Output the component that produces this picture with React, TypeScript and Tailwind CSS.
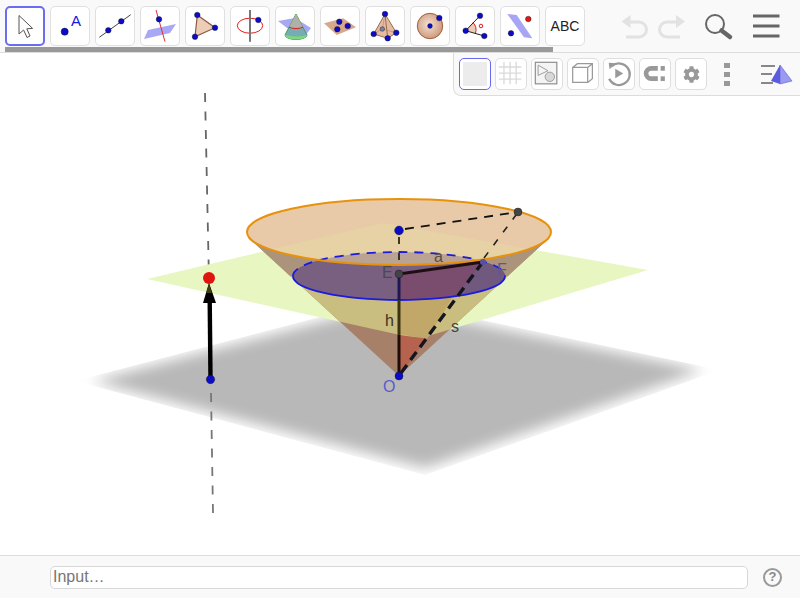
import type { ReactNode } from "react";
import { FaCog } from "react-icons/fa";

const Dot = ({ x, y, r = 2.8, fill = "#0c0cc8" }: { x: number; y: number; r?: number; fill?: string }) => (
  <circle cx={x} cy={y} r={r} fill={fill} stroke="#111" strokeWidth={0.4} />
);

const tools: ReactNode[] = [
  <path key="move" d="M14 9.5 L14 28 L18.6 24 L22 31.5 L25 30 L21.8 22.8 L27.6 22.4 Z" fill="#fff" stroke="#555" strokeWidth={1} strokeLinejoin="round" />,
  <g key="point">
    <Dot x={14.7} y={25.7} r={3.6} />
    <text x={26} y={20} textAnchor="middle" fontSize={15} fill="#1616e0">A</text>
  </g>,
  <g key="line">
    <line x1={4.3} y1={31.3} x2={35.7} y2={8.7} stroke="#444" strokeWidth={1} />
    <Dot x={13.3} y={24.3} />
    <Dot x={26.3} y={15.3} />
  </g>,
  <g key="perp">
    <polygon points="8,24 36,18 30,27 4,33" fill="#a8a8f6" />
    <line x1={16} y1={4} x2={25} y2={35.7} stroke="#e03030" strokeWidth={1} />
    <Dot x={19} y={13.3} />
  </g>,
  <g key="polygon">
    <polygon points="12.3,9 30,21.7 10,30.7" fill="#eccdb8" stroke="#8a5a40" strokeWidth={1.2} />
    <Dot x={12.3} y={9} />
    <Dot x={30} y={21.7} />
    <Dot x={10} y={30.7} />
  </g>,
  <g key="circle">
    <ellipse cx={20} cy={19.7} rx={12.7} ry={7.5} fill="none" stroke="#e02020" strokeWidth={1} />
    <line x1={20} y1={4} x2={20} y2={35.7} stroke="#777" strokeWidth={2} />
    <Dot x={28.3} y={14} />
  </g>,
  <g key="cone">
    <polygon points="3,15 20,12 36,22 30,30 12,22" fill="#a8a8f2" />
    <path d="M21 8 L10 29 A11 4.5 0 0 0 32 29 Z" fill="#8fd08f" stroke="#3aa03a" strokeWidth={1} />
    <path d="M21 8 L14 21 A8 3 0 0 0 28 21 Z" fill="#b0b0a8" />
    <path d="M14 21 L10 29 A11 4.5 0 0 0 32 29 L28 21 A8 3 0 0 1 14 21 Z" fill="#5f8fd0" opacity={0.55} />
    <path d="M14 21 A8 3 0 0 0 28 21" fill="none" stroke="#e02020" strokeWidth={1} />
    <path d="M13.5 29.5 A11 3 0 0 0 30 29.5 L32 29 A11 4.5 0 0 1 10 29 Z" fill="#7ed67e" />
  </g>,
  <g key="plane">
    <polygon points="4,17.3 23.3,12.3 36,21.3 16.7,29" fill="#d8a88c" />
    <Dot x={19.3} y={15.7} />
    <Dot x={27.7} y={20} />
    <Dot x={17.3} y={23.3} />
  </g>,
  <g key="pyramid">
    <polygon points="20,8 8.7,28 22.7,32.3 31.3,26.7" fill="#e4bca2" stroke="#9a6a4c" strokeWidth={1} />
    <line x1={20} y1={8} x2={22.7} y2={32.3} stroke="#9a6a4c" strokeWidth={1} />
    <path d="M8.7 28 L17.3 23 L31.3 26.7 M20 8 L17.3 23" fill="none" stroke="#b88a70" strokeWidth={0.7} />
    <Dot x={17.3} y={23} r={2.3} fill="#7b80a8" />
    <Dot x={20} y={8} />
    <Dot x={8.7} y={28} />
    <Dot x={22.7} y={32.3} />
    <Dot x={31.3} y={26.7} />
  </g>,
  <g key="sphere">
    <defs>
      <radialGradient id="sphereFill" cx="0.45" cy="0.45" r="0.6">
        <stop offset="0" stopColor="#f4e2d6" />
        <stop offset="1" stopColor="#cc9474" />
      </radialGradient>
    </defs>
    <circle cx={20} cy={20} r={12.7} fill="url(#sphereFill)" stroke="#a0603f" strokeWidth={1} />
    <Dot x={20} y={20} r={2.4} />
    <Dot x={29.3} y={12} />
  </g>,
  <g key="angle">
    <path d="M10.7 24.7 L18 16.5 A11 11 0 0 1 20.5 27.3 Z" fill="#eccdb8" />
    <path d="M18 16.5 A11 11 0 0 1 20.5 27.3" fill="none" stroke="#e02020" strokeWidth={1} />
    <line x1={10.7} y1={24.7} x2={25} y2={9.7} stroke="#222" strokeWidth={1} />
    <line x1={10.7} y1={24.7} x2={29.3} y2={30} stroke="#222" strokeWidth={1} />
    <circle cx={26} cy={20} r={1.8} fill="none" stroke="#e02020" strokeWidth={1} />
    <Dot x={10.7} y={24.7} />
    <Dot x={25} y={9.7} />
    <Dot x={29.3} y={30} />
  </g>,
  <g key="parallel">
    <polygon points="7.3,8 16.7,9 32.3,32.3 24,31.3" fill="#a6a6f4" />
    <Dot x={11} y={27.3} />
    <Dot x={28.3} y={13} fill="#e01818" />
  </g>,
  <text key="abc" x={20} y={25} textAnchor="middle" fontSize={14} fill="#222">ABC</text>,
];

const StyleBtn = ({ children, active }: { children: ReactNode; active?: boolean }) => (
  <div
    className={
      active
        ? "w-8 h-8 rounded-[5px] border border-[#6868f0] bg-white"
        : "w-8 h-8 rounded-[5px] border border-[#dedede] bg-white"
    }
  >
    {children}
  </div>
);

const Icon32 = ({ children }: { children: ReactNode }) => (
  <svg viewBox="0 0 32 32" className="w-[30px] h-[30px]">
    {children}
  </svg>
);

const Scene = () => (
  <svg viewBox="0 53 800 502" className="w-[800px] h-[502px] block">
    <defs>
      <clipPath id="grayClip">
        <polygon points="75,381 425,475 720,370 385,300" />
      </clipPath>
      <filter id="soft" x="-10%" y="-10%" width="120%" height="120%">
        <feGaussianBlur stdDeviation="7" />
      </filter>
      <clipPath id="coneClip">
        <path d="M399 376 L251 240 A152 33 0 0 1 547 240 Z" />
      </clipPath>
      <clipPath id="rimClip">
        <ellipse cx={399} cy={232} rx={152} ry={33} />
      </clipPath>
      <clipPath id="midClip">
        <ellipse cx={399} cy={276} rx={106} ry={24} />
      </clipPath>
    </defs>

    {/* floor */}
    <g clipPath="url(#grayClip)">
      <polygon points="92,381 425,468 703,370 385,305" fill="#b8b8b8" filter="url(#soft)" />
    </g>

    {/* axis */}
    <line x1={205} y1={93} x2={208.8} y2={272} stroke="#666" strokeWidth={1.8} strokeDasharray="9 9.5" />
    <line x1={211} y1={393} x2={213} y2={513} stroke="#777" strokeWidth={1.8} strokeDasharray="9 9.5" />

    {/* plane */}
    <polygon points="147,279 383,223 648,270 418,339" fill="#e8f7c2" />

    {/* cone body */}
    <path d="M399 376 L251 240 A152 33 0 0 1 547 240 Z" fill="#a78069" />
    <g clipPath="url(#coneClip)">
      <polygon points="147,279 383,223 648,270 418,339" fill="#cabd80" />
      <polygon points="240,190 560,190 560,276 240,276" fill="#ac937c" />
      <polygon points="399,298 452,298 427,339 399,334" fill="#c2a868" />
      <polygon points="398,335 427,338.5 400,375" fill="#b5634f" />
    </g>

    {/* cut circle */}
    <ellipse cx={399} cy={276} rx={106} ry={24} fill="#7a6080" />
    <g clipPath="url(#midClip)">
      <polygon points="399,274 483,262 450,304 399,304" fill="#7a4c6e" />
      <polygon points="483,262 520,262 520,304 450,304" fill="#70587e" />
    </g>

    {/* top disc */}
    <ellipse cx={399} cy={232} rx={152} ry={33} fill="#e9caa8" />
    <g clipPath="url(#rimClip)">
      <polygon points="147,279 383,223 648,270 418,339" fill="#e6d2a4" />
      <ellipse cx={399} cy={276} rx={106} ry={24} fill="#baa392" />
    </g>
    <path d="M293 276 A106 24 0 0 1 505 276" fill="none" stroke="#1a1ae0" strokeWidth={1.8} strokeDasharray="9 7" />
    <path d="M293 276 A106 24 0 0 0 505 276" fill="none" stroke="#1a1ae0" strokeWidth={1.8} />
    <ellipse cx={399} cy={232} rx={152} ry={33} fill="none" stroke="#e8920c" strokeWidth={2} />

    {/* segments */}
    <line x1={399} y1={237} x2={399} y2={268} stroke="#2a2a10" strokeWidth={1.8} strokeDasharray="7 9" />
    <line x1={399} y1={274} x2={399} y2={300} stroke="#1c1854" strokeWidth={3} />
    <line x1={399} y1={300} x2={399} y2={335} stroke="#3a3510" strokeWidth={3} />
    <line x1={399} y1={335} x2={399} y2={376} stroke="#1d0d08" strokeWidth={3} />
    <line x1={399} y1={274} x2={483} y2={262} stroke="#1f0f14" strokeWidth={3} />
    <line x1={401} y1={373} x2={482} y2={263} stroke="#151520" strokeWidth={3.4} strokeDasharray="10 6" />
    <line x1={484} y1={258} x2={516} y2={215} stroke="#222" strokeWidth={1.6} strokeDasharray="7 9" />
    <line x1={405} y1={229} x2={518} y2={212} stroke="#111" strokeWidth={1.8} strokeDasharray="9 7" />

    {/* points */}
    <Dot x={399} y={230.5} r={4.4} />
    <Dot x={518} y={212} r={4} fill="#444" />
    <Dot x={399} y={274} r={4} fill="#444" />
    <circle cx={483} cy={262} r={3} fill="#5a50a0" />
    <Dot x={399} y={376} r={4} />

    {/* vector */}
    <line x1={210.5} y1={379} x2={209.7} y2={300} stroke="#000" strokeWidth={4.4} />
    <polygon points="209,283 203,303 216,303" fill="#000" />
    <polygon points="209,283 206.2,293 211.8,293" fill="#3f3f10" />
    <circle cx={209} cy={278} r={6} fill="#e0140f" />
    <Dot x={210.5} y={379.5} r={4.2} />

    {/* labels */}
    <g fontSize={16}>
      <text x={382} y={278} fill="#4a4a4a">E</text>
      <text x={434} y={262} fill="#5c4e40">a</text>
      <text x={497} y={275} fill="#5a5a8e">F</text>
      <text x={385} y={326} fill="#3a3320">h</text>
      <text x={451} y={332} fill="#444">s</text>
      <text x={383} y={392} fill="#5a5acc">O</text>
    </g>
  </svg>
);

export default function App() {
  return (
    <div className="relative w-[800px] h-[600px] flex flex-col bg-white overflow-hidden font-['Liberation_Sans',sans-serif]">
      {/* top toolbar */}
      <div className="h-[53px] shrink-0 bg-[#f9f9f9] border-b border-[#dcdcdc]">
        <div className="flex h-[47px] pt-[6px] pl-[5px] gap-[5px]">
          {tools.map((icon, i) => (
            <div
              key={i}
              className={
                i === 0
                  ? "w-10 h-10 rounded-[5px] border-2 border-[#6a6cf2] bg-white"
                  : "w-10 h-10 rounded-[5px] border border-[#e0e0e0] bg-white"
              }
            >
              <svg viewBox="0 0 40 40" className={i === 0 ? "w-10 h-10 -m-[2px]" : "w-10 h-10 -m-px"}>
                {icon}
              </svg>
            </div>
          ))}
          {/* undo, redo, search, menu */}
          <svg viewBox="0 0 180 46" className="ml-auto w-[180px] h-[46px] -mt-[6px]">
            <g fill="none" stroke="#e2e2e2" strokeWidth={3}>
              <path d="M9 22 H19 A7.5 7.5 0 0 1 19 37 H6" />
              <path d="M57 22 H47 A7.5 7.5 0 0 0 47 37 H60" />
            </g>
            <polygon points="1.5,21.5 10.5,15 10.5,28" fill="#e2e2e2" />
            <polygon points="65,21.5 56,15 56,28" fill="#e2e2e2" />
            <circle cx={95} cy={24} r={9} fill="none" stroke="#666" strokeWidth={2} />
            <line x1={101.5} y1={30.5} x2={110} y2={37} stroke="#666" strokeWidth={4.5} strokeLinecap="round" />
            <path d="M133 16 H159.5 M133 26 H159.5 M133 36 H159.5" stroke="#666" strokeWidth={3} />
          </svg>
        </div>
        <div className="ml-[5px] w-[548px] h-[5px] bg-[#999]" />
      </div>

      {/* graphics view */}
      <div className="flex-1">
        <Scene />
      </div>

      {/* input bar */}
      <div className="h-[43px] shrink-0 mb-[2px] bg-[#f9f9f9] border-t border-[#dcdcdc] flex items-center pl-[50px] pr-[17px]">
        <div className="w-[698px] h-[23px] rounded-[5px] border border-[#d8d8d8] bg-white flex items-center pl-[2px] text-[16px] text-[#757575]">
          Input…
        </div>
        <div className="ml-[15px] w-[19px] h-[19px] rounded-full border-2 border-[#999] flex items-center justify-center text-[13px] font-bold text-[#888]">
          ?
        </div>
      </div>

      {/* style bar */}
      <div className="absolute left-[453px] top-[53px] w-[347px] h-[43px] bg-[#f9f9f9] border-l border-b border-[#dcdcdc] rounded-bl-[8px] flex items-start pl-[5px] pt-[5px] gap-1">
        <StyleBtn active>
          <div className="w-[24px] h-[24px] m-[3px] bg-[#ececec]" />
        </StyleBtn>
        <StyleBtn>
          <Icon32>
            <path d="M8.5 3 V27 M15 3 V27 M21.5 3 V27 M3 8.5 H27 M3 15 H27 M3 21.5 H27" stroke="#dadada" strokeWidth={1.4} fill="none" />
          </Icon32>
        </StyleBtn>
        <StyleBtn>
          <Icon32>
            <rect x={3.5} y={3.5} width={23} height={23} fill="#f4f4f4" stroke="#888" strokeWidth={1.2} />
            <polygon points="6.5,6.5 17,12.5 6.5,17.5" fill="#f4f4f4" stroke="#999" strokeWidth={1} />
            <circle cx={19} cy={19} r={5} fill="#d8d8d8" stroke="#999" strokeWidth={1} />
          </Icon32>
        </StyleBtn>
        <StyleBtn>
          <Icon32>
            <path d="M5 9 H21 V25 H5 Z M5 9 L10 5 H26 V21 L21 25 M21 9 L26 5" fill="none" stroke="#999" strokeWidth={1.3} />
          </Icon32>
        </StyleBtn>
        <StyleBtn>
          <Icon32>
            <path d="M8.5 7.5 A11.5 11.5 0 1 1 5.5 21" fill="none" stroke="#999" strokeWidth={2.4} />
            <polygon points="5,4 12.5,4.5 6,11" fill="#999" />
            <polygon points="12,10.5 20.5,15.5 12,20.5" fill="#999" />
          </Icon32>
        </StyleBtn>
        <StyleBtn>
          <Icon32>
            <path d="M19 10 H12 A5.5 5.5 0 0 0 12 21 H19" fill="none" stroke="#999" strokeWidth={5} />
            <rect x={22} y={7.5} width={4.5} height={5} fill="#999" />
            <rect x={22} y={18.5} width={4.5} height={5} fill="#999" />
          </Icon32>
        </StyleBtn>
        <StyleBtn>
          <div className="w-full h-full flex items-center justify-center">
            <FaCog className="w-[17px] h-[17px] text-[#999]" />
          </div>
        </StyleBtn>
        <div className="ml-[13px] pt-[5px] flex flex-col gap-1">
          <div className="w-[6px] h-[5px] bg-[#999]" />
          <div className="w-[6px] h-[5px] bg-[#999]" />
          <div className="w-[6px] h-[5px] bg-[#999]" />
        </div>
        <svg viewBox="0 0 34 24" className="w-[34px] h-[24px] ml-[27px] mt-[5px]">
          <path d="M0 3 H14 M0 11 H11 M0 20 H12" stroke="#888" strokeWidth={2} />
          <polygon points="19,2 10,18 19,21" fill="#5c5cdc" />
          <polygon points="19,2 31,18 19,21" fill="#9a9aee" stroke="#5c5cdc" strokeWidth={0.6} />
        </svg>
      </div>
    </div>
  );
}
